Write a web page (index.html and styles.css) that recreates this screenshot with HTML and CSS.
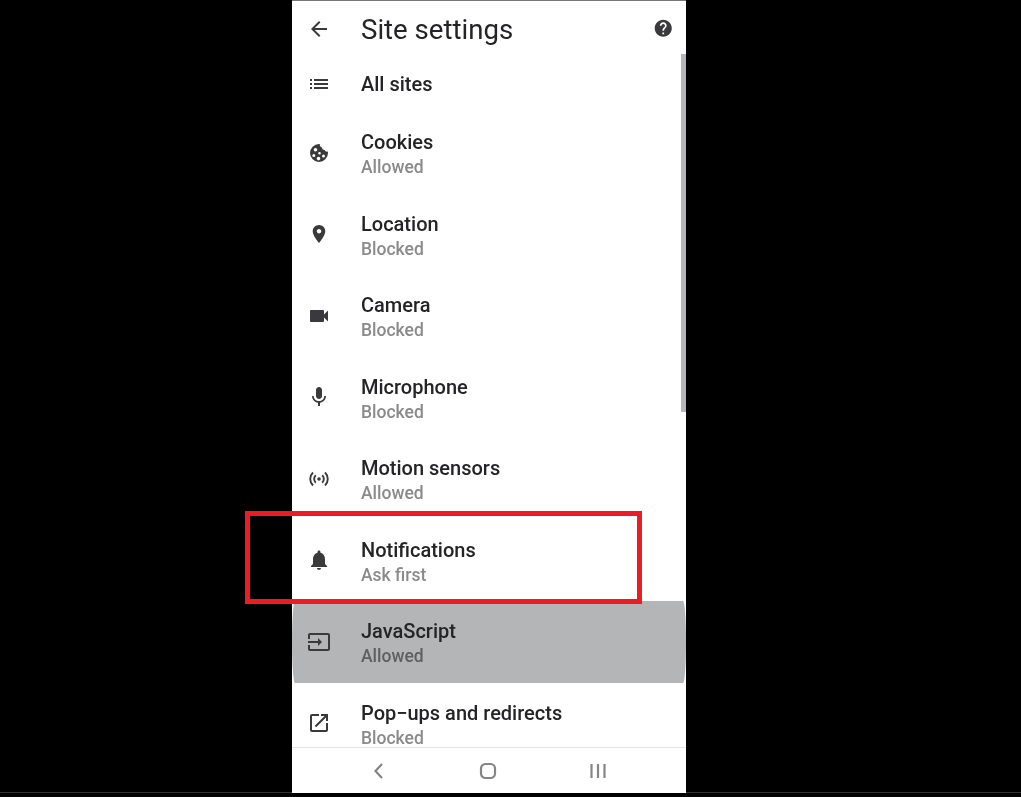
FILE: index.html
```html
<!DOCTYPE html>
<html lang="en">
<head>
  <meta charset="UTF-8">
  <title>Site settings</title>
  <link rel="stylesheet" href="styles.css">
</head>
<body>
  <div class="screen-edge"></div>
  <div class="phone">
    <header class="topbar">
      <svg class="icon" viewBox="0 0 24 24"><path d="M20 11H7.83l5.59-5.59L12 4l-8 8 8 8 1.41-1.41L7.83 13H20v-2z"/></svg>
      <h1 class="title">Site settings</h1>
      <svg class="icon help" viewBox="0 0 24 24"><path d="M12 2C6.48 2 2 6.48 2 12s4.48 10 10 10 10-4.48 10-10S17.52 2 12 2zm1 17h-2v-2h2v2zm2.07-7.75l-.9.92C13.45 12.9 13 13.5 13 15h-2v-.5c0-1.1.45-2.1 1.17-2.83l1.24-1.26c.37-.36.59-.86.59-1.41 0-1.1-.9-2-2-2s-2 .9-2 2H8c0-2.21 1.79-4 4-4s4 1.79 4 4c0 .88-.36 1.68-.93 2.25z"/></svg>
    </header>

    <div class="list">
      <div class="row row-single">
        <svg class="icon" viewBox="0 0 24 24"><path d="M3 13h2v-2H3v2zm0 4h2v-2H3v2zm0-8h2V7H3v2zm4 4h14v-2H7v2zm0 4h14v-2H7v2zM7 7v2h14V7H7z"/></svg>
        <div class="text"><div class="name">All sites</div></div>
      </div>
      <div class="row">
        <svg class="icon" viewBox="0 0 24 24"><path fill-rule="evenodd" d="M12 3a9 9 0 1 0 9 9c0-.6 0-1-.2-1.5-1.300.5-2.700-.2-3-1.500-1.500.2-2.800-1-2.800-2.500-1.500-.2-2.500-1.800-2.200-3.400C12.500 3 12.200 3 12 3zM8.500 7a1.800 1.800 0 1 1 0 3.600 1.800 1.800 0 0 1 0-3.600zM6.800 13a1.500 1.500 0 1 1 0 3 1.500 1.500 0 0 1 0-3zM12.500 11a1.300 1.300 0 1 1 0 2.600 1.300 1.300 0 0 1 0-2.600zM11.500 15.800a1.800 1.800 0 1 1 0 3.600 1.800 1.800 0 0 1 0-3.600zM16.500 13.500a1.500 1.500 0 1 1 0 3 1.500 1.500 0 0 1 0-3z"/></svg>
        <div class="text"><div class="name">Cookies</div><div class="status">Allowed</div></div>
      </div>
      <div class="row">
        <svg class="icon icon-pin" viewBox="0 0 24 24"><path d="M12 2C8.130 2 5 5.130 5 9c0 5.250 7 13 7 13s7-7.750 7-13c0-3.870-3.130-7-7-7zm0 9.500c-1.380 0-2.500-1.120-2.500-2.500s1.120-2.500 2.500-2.500 2.500 1.120 2.500 2.500-1.120 2.500-2.500 2.500z"/></svg>
        <div class="text"><div class="name">Location</div><div class="status">Blocked</div></div>
      </div>
      <div class="row">
        <svg class="icon" viewBox="0 0 24 24"><path d="M17 10.500V7c0-.55-.45-1-1-1H4c-.55 0-1 .45-1 1v10c0 .55.45 1 1 1h12c.55 0 1-.45 1-1v-3.500l4 4v-11l-4 4z"/></svg>
        <div class="text"><div class="name">Camera</div><div class="status">Blocked</div></div>
      </div>
      <div class="row">
        <svg class="icon" viewBox="0 0 24 24"><path d="M12 14c1.660 0 2.990-1.340 2.990-3L15 5c0-1.660-1.340-3-3-3S9 3.340 9 5v6c0 1.660 1.340 3 3 3zm5.300-3c0 3-2.540 5.100-5.300 5.100S6.700 14 6.700 11H5c0 3.410 2.720 6.230 6 6.720V21h2v-3.280c3.280-.48 6-3.300 6-6.720h-1.700z"/></svg>
        <div class="text"><div class="name">Microphone</div><div class="status">Blocked</div></div>
      </div>
      <div class="row">
        <svg class="icon" viewBox="0 0 24 24"><circle cx="12" cy="12" r="1.800"/><path class="arc" d="M8.800 8.300a5 5 0 0 0 0 7.400M15.200 8.300a5 5 0 0 1 0 7.400M6 5.500a9 9 0 0 0 0 13M18 5.500a9 9 0 0 1 0 13"/></svg>
        <div class="text"><div class="name">Motion sensors</div><div class="status">Allowed</div></div>
      </div>
      <div class="row">
        <svg class="icon" viewBox="0 0 24 24"><path d="M12 22c1.100 0 2-.9 2-2h-4c0 1.100.89 2 2 2zm6-6v-5c0-3.070-1.640-5.640-4.500-6.320V4c0-.83-.67-1.500-1.500-1.500s-1.500.67-1.500 1.500v.68C7.630 5.360 6 7.920 6 11v5l-2 2v1h16v-1l-2-2z"/></svg>
        <div class="text"><div class="name">Notifications</div><div class="status">Ask first</div></div>
      </div>
      <div class="row row-pressed">
        <svg class="icon" viewBox="0 0 24 24"><path d="M21 3.010H3c-1.100 0-2 .9-2 2V9h2V4.990h18v14.030H3V15H1v4.010c0 1.100.9 1.980 2 1.980h18c1.100 0 2-.88 2-1.980v-14c0-1.110-.9-2-2-2zM11 16l4-4-4-4v3H1v2h10v3z"/></svg>
        <div class="text"><div class="name">JavaScript</div><div class="status">Allowed</div></div>
      </div>
      <div class="row">
        <svg class="icon" viewBox="0 0 24 24"><path d="M19 19H5V5h7V3H5c-1.110 0-2 .9-2 2v14c0 1.100.89 2 2 2h14c1.100 0 2-.9 2-2v-7h-2v7zM14 3v2h3.590l-9.830 9.830 1.410 1.410L19 6.410V10h2V3h-7z"/></svg>
        <div class="text"><div class="name">Pop−ups and redirects</div><div class="status">Blocked</div></div>
      </div>
    </div>

    <nav class="navbar">
      <svg class="nav-icon" viewBox="0 0 24 24"><path d="M16 5l-6.500 7 6.500 7"/></svg>
      <svg class="nav-icon" viewBox="0 0 24 24"><rect x="5" y="5" width="14" height="14" rx="4.500"/></svg>
      <svg class="nav-icon" viewBox="0 0 24 24"><path d="M5.500 5v14M12 5v14M18.500 5v14"/></svg>
    </nav>

    <div class="scrollbar"></div>
    <div class="callout"></div>
  </div>
</body>
</html>
```

FILE: styles.css
```css
html, body {
  margin: 0;
  height: 100%;
  background: #000;
  overflow: hidden;
}
body {
  padding-left: 292px;
  font-family: Roboto, "Liberation Sans", sans-serif;
}
.screen-edge {
  position: absolute;
  left: 0;
  right: 0;
  top: 792px;
  height: 1px;
  background: #333;
}
.phone {
  position: relative;
  width: 394px;
  height: 793px;
  background: #fff;
  border-top: 1px solid #777;
  box-sizing: border-box;
  display: flex;
  flex-direction: column;
}
.icon {
  width: 24px;
  height: 24px;
  flex: none;
  fill: #3a3a3c;
}
.icon-pin {
  transform: scale(.9);
}
.topbar {
  height: 55px;
  flex: none;
  display: flex;
  align-items: center;
  padding: 0 15px;
  filter: blur(.4px);
}
.title {
  margin: 1px 0 0 30px;
  flex: 1;
  font-size: 27.600px;
  font-weight: 400;
  color: #242426;
}
.help {
  width: 20.500px;
  height: 20.500px;
  margin-right: -2px;
}
.list {
  flex: 1;
  min-height: 0;
  overflow: hidden;
  filter: blur(.4px);
}
.row {
  height: 81.500px;
  padding: 0 15px;
  box-sizing: border-box;
  display: flex;
  align-items: center;
}
.row-single {
  height: 56px;
}
.row-pressed {
  background: #b4b5b6;
  border-radius: 3px / 40px;
}
.text {
  margin-left: 30px;
  padding-top: 5px;
}
.row-single .text {
  padding-top: 0;
}
.name {
  font-size: 20px;
  font-weight: 500;
  line-height: 25px;
  color: #242426;
}
.status {
  font-size: 17.500px;
  font-weight: 500;
  line-height: 25px;
  color: #8a8a8a;
}
.row-pressed .status {
  color: #5e5f60;
}
.arc {
  fill: none;
  stroke: #3a3a3c;
  stroke-width: 1.900;
}
.navbar {
  height: 45px;
  flex: none;
  border-top: 1px solid #e4e4e4;
  background: #fff;
  display: flex;
  align-items: center;
  justify-content: space-between;
  padding: 0 76px 0 74px;
  filter: blur(.4px);
}
.nav-icon {
  width: 24px;
  height: 24px;
  fill: none;
  stroke: #858585;
  stroke-width: 2.200;
}
.scrollbar {
  position: absolute;
  top: 53px;
  right: 0;
  width: 5px;
  height: 358px;
  background: #b6b6ba;
}
.callout {
  position: absolute;
  left: -47px;
  top: 510px;
  width: 397px;
  height: 93px;
  box-sizing: border-box;
  border: 5px solid #ed1c24;
}
```
